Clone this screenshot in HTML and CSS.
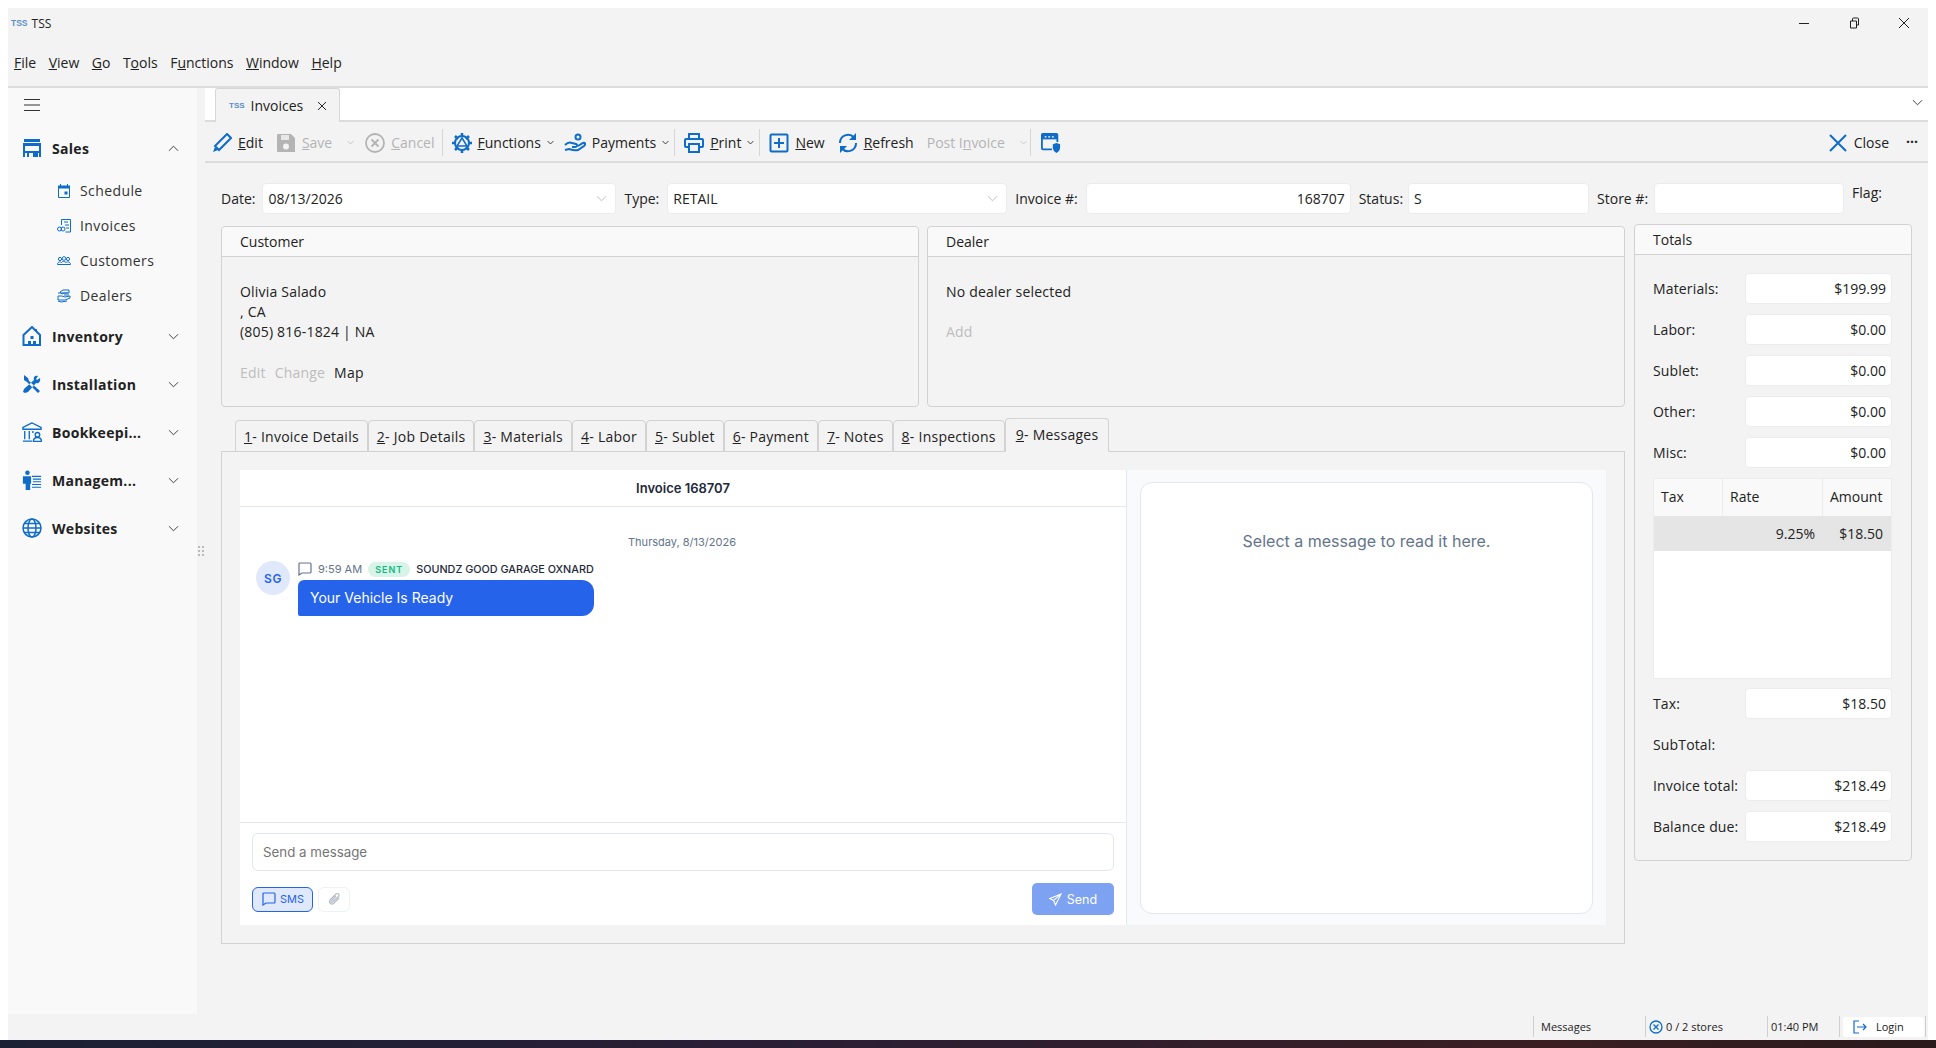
FILE: index.html
```html
<!DOCTYPE html>
<html lang="en">
<head>
    <meta charset="UTF-8">
    <title>TSS</title>
    <link rel="stylesheet" href="styles.css">
</head>
<body>
<div class="window">

    <div class="titlebar">
        <span class="logo">TSS</span>
        <span class="app-name">TSS</span>
        <div class="win-buttons">
            <svg width="12" height="12" viewBox="0 0 12 12"><path d="M1 6.5h10" stroke="#222" fill="none"/></svg>
            <svg width="12" height="12" viewBox="0 0 12 12"><path d="M2.5 4h6v7h-6zM4.5 4V2a1 1 0 0 1 1-1h4a1 1 0 0 1 1 1v6h-2" stroke="#222" fill="none"/></svg>
            <svg width="12" height="12" viewBox="0 0 12 12"><path d="M1 1l10 10M11 1L1 11" stroke="#222" fill="none"/></svg>
        </div>
    </div>

    <div class="menubar">
        <span><u>F</u>ile</span>
        <span><u>V</u>iew</span>
        <span><u>G</u>o</span>
        <span>T<u>o</u>ols</span>
        <span>F<u>u</u>nctions</span>
        <span><u>W</u>indow</span>
        <span><u>H</u>elp</span>
    </div>

    <div class="main">
        <aside class="sidebar">
            <svg class="burger" width="16" height="12" viewBox="0 0 16 12"><path d="M0 .5h16M0 6h16M0 11.5h16" stroke="#333" fill="none"/></svg>

            <div class="nav-group">
                <svg class="nav-icon" viewBox="0 0 20 18"><path d="M2 0h16v3H2zM1 4h18v3H1zM1 7h2v11H1zM17 7h2v11h-2zM3 12h14v2H3zM5 14h2v4H5zM11 14h5v4h-5z" fill="#0f6cc9"/></svg>
                <span>Sales</span>
                <svg class="chev" viewBox="0 0 12 7"><path d="M1 6l5-5 5 5" /></svg>
            </div>
            <div class="nav-item">
                <svg class="sub-icon" viewBox="0 0 14 14"><path d="M1.5 2.5h11v11h-11z" fill="none" stroke="#0f6cc9"/><path d="M1 1.5h12v3H1zM3 0h1v2H3zM10 0h1v2h-1zM7.5 7.5h3v3h-3z" fill="#0f6cc9"/></svg>
                Schedule
            </div>
            <div class="nav-item">
                <svg class="sub-icon" viewBox="0 0 14 14"><path d="M4.5 6V.5h9V13h-5M7 3h4M8 6h4M9 9h3" fill="none" stroke="#0f6cc9"/><circle cx="2.5" cy="10" r="2" fill="none" stroke="#0f6cc9"/><circle cx="6" cy="10" r="2" fill="none" stroke="#0f6cc9"/></svg>
                Invoices
            </div>
            <div class="nav-item">
                <svg class="sub-icon" viewBox="0 0 14 10"><circle cx="3" cy="3" r="1.6" fill="none" stroke="#0f6cc9"/><circle cx="7" cy="2.5" r="1.8" fill="none" stroke="#0f6cc9"/><circle cx="11" cy="3" r="1.6" fill="none" stroke="#0f6cc9"/><path d="M.5 8.5c0-3 3-3 4-2 1-1.500 3-1.500 4.500 0 1-1 4.500-1 4.500 2z" fill="none" stroke="#0f6cc9"/></svg>
                Customers
            </div>
            <div class="nav-item">
                <svg class="sub-icon" viewBox="0 0 14 14"><path d="M3 3l3-2h6v3H7L5 5zM1 4h10M12 6H7M1 7h4l3 1 5-1v2l-5 2H1zM1 12l3 1 6-1" fill="none" stroke="#0f6cc9"/></svg>
                Dealers
            </div>

            <div class="nav-group">
                <svg class="nav-icon" viewBox="0 0 20 20"><path d="M10 1L1.5 9v10H18V9zM14 3v2" fill="none" stroke="#0f6cc9" stroke-width="2"/><path d="M8.5 10h3v3h-3zM6 15h3v4H6zM11 15h3v4h-3z" fill="#0f6cc9"/></svg>
                <span>Inventory</span>
                <svg class="chev" viewBox="0 0 12 7"><path d="M1 1l5 5 5-5" /></svg>
            </div>
            <div class="nav-group">
                <svg class="nav-icon" viewBox="0 0 20 20"><path d="M2 1l4 3 1 3 11 10-2 2L5 8 2 6zM18 4l-3 2-1-1 2-3c-3-1-5 1-4 4L2 15l-1 3 2 1 3-1 8-9c2 1 5-1 4-5z" fill="#0f6cc9"/></svg>
                <span>Installation</span>
                <svg class="chev" viewBox="0 0 12 7"><path d="M1 1l5 5 5-5" /></svg>
            </div>
            <div class="nav-group">
                <svg class="nav-icon" viewBox="0 0 22 22"><path d="M11 1L1 6v2h20V6zM3 10v9M8 10v9M1 21h10M12 10v2" fill="none" stroke="#0f6cc9" stroke-width="1.5"/><circle cx="17" cy="14" r="2.500" fill="none" stroke="#0f6cc9" stroke-width="1.5"/><path d="M12.5 21.5c0-6 9-6 9 0z" fill="none" stroke="#0f6cc9" stroke-width="1.5"/></svg>
                <span>Bookkeepi...</span>
                <svg class="chev" viewBox="0 0 12 7"><path d="M1 1l5 5 5-5" /></svg>
            </div>
            <div class="nav-group">
                <svg class="nav-icon" viewBox="0 0 22 22"><circle cx="6" cy="3" r="2.500" fill="#0f6cc9"/><path d="M1 7h9v8H9v7H4v-7H1z" fill="#0f6cc9"/><path d="M11 7h10M12 10h9M12 13h9M11 16h10M11 19h10" stroke="#0f6cc9" stroke-width="1.2"/></svg>
                <span>Managem...</span>
                <svg class="chev" viewBox="0 0 12 7"><path d="M1 1l5 5 5-5" /></svg>
            </div>
            <div class="nav-group">
                <svg class="nav-icon" viewBox="0 0 20 20"><g fill="none" stroke="#0f6cc9" stroke-width="1.5"><circle cx="10" cy="10" r="9"/><ellipse cx="10" cy="10" rx="4" ry="9"/><path d="M1 10h18M2 5.5h16M2 14.5h16"/></g></svg>
                <span>Websites</span>
                <svg class="chev" viewBox="0 0 12 7"><path d="M1 1l5 5 5-5" /></svg>
            </div>
            <div class="grip">
                <i></i><i></i><i></i><i></i><i></i><i></i>
            </div>
        </aside>

        <section class="content">
            <div class="tabstrip">
                <div class="doc-tab">
                    <span class="logo small">TSS</span>
                    Invoices
                    <svg width="10" height="10" viewBox="0 0 10 10"><path d="M1 1l8 8M9 1L1 9" stroke="#222" fill="none"/></svg>
                </div>
                <svg class="strip-chev" width="11" height="7" viewBox="0 0 12 7"><path d="M1 1l5 5 5-5" stroke="#333" fill="none"/></svg>
            </div>

            <div class="toolbar">
                <div class="tool">
                    <svg class="t-icon" viewBox="0 0 20 20"><path d="M15 1l4 4L7 17l-4-4z" fill="none" stroke="#0f6cc9" stroke-width="2"/><path d="M1 19l2-5 3 3z" fill="#0f6cc9"/></svg>
                    <span><u>E</u>dit</span>
                </div>
                <div class="tool off">
                    <svg class="t-icon" viewBox="0 0 20 20"><path d="M2 1h13l4 4v14H2a1 1 0 0 1-1-1V2a1 1 0 0 1 1-1z" fill="#b4b4b4"/><path d="M5 2h8v5H5z" fill="#e8e8e8"/><circle cx="10" cy="13.5" r="3" fill="#f3f3f3"/></svg>
                    <span><u>S</u>ave</span>
                </div>
                <svg class="drop off-chev" viewBox="0 0 12 7"><path d="M1 1l5 5 5-5"/></svg>
                <div class="tool off">
                    <svg class="t-icon" viewBox="0 0 20 20"><circle cx="10" cy="10" r="9" fill="none" stroke="#b4b4b4" stroke-width="1.8"/><path d="M6.5 6.5l7 7M13.5 6.5l-7 7" stroke="#b4b4b4" stroke-width="1.8"/></svg>
                    <span><u>C</u>ancel</span>
                </div>
                <div class="sep"></div>
                <div class="tool">
                    <svg class="t-icon" viewBox="0 0 20 20"><g fill="none" stroke="#0f6cc9"><circle cx="10" cy="10" r="7" stroke-width="2"/><path d="M10 0v4M10 16v4M0 10h4M16 10h4M3 3l3 3M14 14l3 3M17 3l-3 3M6 14l-3 3" stroke-width="2.5"/><path d="M10 5l5 8H5z" stroke-width="1.5"/></g></svg>
                    <span><u>F</u>unctions</span>
                </div>
                <svg class="drop" viewBox="0 0 12 7"><path d="M1 1l5 5 5-5"/></svg>
                <div class="tool">
                    <svg class="t-icon wide" viewBox="0 0 22 20"><g fill="none" stroke="#0f6cc9" stroke-width="2"><circle cx="14" cy="4" r="2.500"/><path d="M1 12c3-3 5-3 7-2l4 1c2 1 1 3-1 3H8M14 13l5-3c2-1 3 1 1 3l-6 4c-3 1-6 0-9-1l-4 1"/></g></svg>
                    <span>Payments</span>
                </div>
                <svg class="drop" viewBox="0 0 12 7"><path d="M1 1l5 5 5-5"/></svg>
                <div class="sep"></div>
                <div class="tool">
                    <svg class="t-icon" viewBox="0 0 20 20"><g fill="none" stroke="#0f6cc9" stroke-width="2"><path d="M5 6V1h10v5M5 14H2a1 1 0 0 1-1-1V7a1 1 0 0 1 1-1h16a1 1 0 0 1 1 1v6a1 1 0 0 1-1 1h-3M5 11h10v8H5z"/></g></svg>
                    <span><u>P</u>rint</span>
                </div>
                <svg class="drop" viewBox="0 0 12 7"><path d="M1 1l5 5 5-5"/></svg>
                <div class="sep"></div>
                <div class="tool">
                    <svg class="t-icon" viewBox="0 0 20 20"><g fill="none" stroke="#0f6cc9" stroke-width="2"><rect x="1.5" y="1.5" width="17" height="17" rx="1"/><path d="M10 5v10M5 10h10"/></g></svg>
                    <span><u>N</u>ew</span>
                </div>
                <div class="tool">
                    <svg class="t-icon" viewBox="0 0 20 20"><g fill="none" stroke="#0f6cc9" stroke-width="2"><path d="M2 10a8 8 0 0 1 14-5.500M18 10a8 8 0 0 1-14 5.500"/></g><path d="M18 0v7h-7zM2 20v-7h7z" fill="#0f6cc9"/></svg>
                    <span><u>R</u>efresh</span>
                </div>
                <div class="tool off">
                    <span>Post I<u>n</u>voice</span>
                </div>
                <svg class="drop off-chev" viewBox="0 0 12 7"><path d="M1 1l5 5 5-5"/></svg>
                <div class="sep"></div>
                <div class="tool">
                    <svg class="t-icon wide" viewBox="0 0 22 22"><g fill="none" stroke="#0f6cc9" stroke-width="2"><path d="M12 18H2a1 1 0 0 1-1-1V2a1 1 0 0 1 1-1h15a1 1 0 0 1 1 1v8"/></g><path d="M1 1h17v6H1z" fill="#0f6cc9"/><path d="M4 3.500h2V5H4zM8 3.500h2V5H8zM12 3.500h2V5h-2z" fill="#fff"/><path d="M17 11l4 1.500V16c0 3-2 5-4 6-2-1-4-3-4-6v-3.500z" fill="#0f6cc9"/></svg>
                </div>
                <div class="tool right">
                    <svg class="t-icon" viewBox="0 0 20 20"><path d="M2 2l16 16M18 2L2 18" stroke="#0f6cc9" stroke-width="2" fill="none"/></svg>
                    <span>Close</span>
                </div>
                <span class="more">···</span>
            </div>

            <div class="form-row">
                <label>Date:</label>
                <div class="input w-date">08/13/2026<svg class="in-chev" viewBox="0 0 12 7"><path d="M1 1l5 5 5-5"/></svg></div>
                <label>Type:</label>
                <div class="input w-type">RETAIL<svg class="in-chev" viewBox="0 0 12 7"><path d="M1 1l5 5 5-5"/></svg></div>
                <label>Invoice #:</label>
                <div class="input w-inv num">168707</div>
                <label>Status:</label>
                <div class="input w-status">S</div>
                <label>Store #:</label>
                <div class="input w-store"></div>
                <label class="flag">Flag:</label>
            </div>

            <div class="body-grid">
                <div class="left-col">
                    <div class="panels">
                        <div class="panel">
                            <div class="panel-head">Customer</div>
                            <div class="panel-body">
                                <p>Olivia Salado</p>
                                <p>, CA</p>
                                <p>(805) 816-1824 | NA</p>
                                <p class="links"><span class="dim">Edit</span><span class="dim">Change</span><span>Map</span></p>
                            </div>
                        </div>
                        <div class="panel">
                            <div class="panel-head">Dealer</div>
                            <div class="panel-body">
                                <p>No dealer selected</p>
                                <p>&nbsp;</p>
                                <p class="dim">Add</p>
                            </div>
                        </div>
                    </div>

                    <div class="tabs">
                        <div class="tab"><u>1</u>- Invoice Details</div>
                        <div class="tab"><u>2</u>- Job Details</div>
                        <div class="tab"><u>3</u>- Materials</div>
                        <div class="tab"><u>4</u>- Labor</div>
                        <div class="tab"><u>5</u>- Sublet</div>
                        <div class="tab"><u>6</u>- Payment</div>
                        <div class="tab"><u>7</u>- Notes</div>
                        <div class="tab"><u>8</u>- Inspections</div>
                        <div class="tab active"><u>9</u>- Messages</div>
                    </div>

                    <div class="tab-page">
                        <div class="messenger">
                            <div class="thread">
                                <div class="thread-head">Invoice 168707</div>
                                <div class="thread-body">
                                    <div class="day">Thursday, 8/13/2026</div>
                                    <div class="msg">
                                        <div class="avatar">SG</div>
                                        <div>
                                            <div class="msg-meta">
                                                <svg width="14" height="14" viewBox="0 0 14 14"><path d="M2 1h10a1 1 0 0 1 1 1v8a1 1 0 0 1-1 1H4l-3 2V2a1 1 0 0 1 1-1z" fill="none" stroke="#64748b" stroke-width="1.2"/></svg>
                                                <span class="time">9:59 AM</span>
                                                <span class="sent">SENT</span>
                                                <span class="sender">SOUNDZ GOOD GARAGE OXNARD</span>
                                            </div>
                                            <div class="bubble">Your Vehicle Is Ready</div>
                                        </div>
                                    </div>
                                </div>
                                <div class="composer">
                                    <div class="msg-input">Send a message</div>
                                    <div class="composer-row">
                                        <div class="sms">
                                            <svg width="14" height="14" viewBox="0 0 14 14"><path d="M2 1h10a1 1 0 0 1 1 1v8a1 1 0 0 1-1 1H4l-3 2V2a1 1 0 0 1 1-1z" fill="none" stroke="#2563eb" stroke-width="1.2"/></svg>
                                            SMS
                                        </div>
                                        <div class="attach">
                                            <svg width="14" height="14" viewBox="0 0 14 14"><path d="M12 6l-5.500 5.500a2.500 2.500 0 0 1-3.500-3.500l6-6a1.700 1.700 0 0 1 2.500 2.500L5.500 10a.8.8 0 0 1-1.200-1.200L9 4" fill="none" stroke="#b6bcc8" stroke-width="1.2"/></svg>
                                        </div>
                                        <div class="send">
                                            <svg width="13" height="13" viewBox="0 0 14 14"><path d="M13 1L1 6l4 2 2 5zM5 8l8-7" fill="none" stroke="#fff" stroke-width="1.2"/></svg>
                                            Send
                                        </div>
                                    </div>
                                </div>
                            </div>
                            <div class="reader">
                                <div class="reader-card">Select a message to read it here.</div>
                            </div>
                        </div>
                    </div>
                </div>

                <div class="totals">
                    <div class="panel-head">Totals</div>
                    <div class="totals-body">
                        <div class="t-row"><span>Materials:</span><div class="input num">$199.99</div></div>
                        <div class="t-row"><span>Labor:</span><div class="input num">$0.00</div></div>
                        <div class="t-row"><span>Sublet:</span><div class="input num">$0.00</div></div>
                        <div class="t-row"><span>Other:</span><div class="input num">$0.00</div></div>
                        <div class="t-row"><span>Misc:</span><div class="input num">$0.00</div></div>
                        <div class="tax-table">
                            <div class="tax-head"><span>Tax</span><span>Rate</span><span>Amount</span></div>
                            <div class="tax-line"><span></span><span>9.25%</span><span>$18.50</span></div>
                        </div>
                        <div class="t-row"><span>Tax:</span><div class="input num">$18.50</div></div>
                        <div class="t-row"><span>SubTotal:</span></div>
                        <div class="t-row"><span>Invoice total:</span><div class="input num">$218.49</div></div>
                        <div class="t-row"><span>Balance due:</span><div class="input num">$218.49</div></div>
                    </div>
                </div>
            </div>
        </section>
    </div>

    <div class="statusbar">
        <div class="st-cell st-msg">Messages</div>
        <div class="st-cell st-stores">
            <svg width="14" height="14" viewBox="0 0 14 14"><circle cx="7" cy="7" r="6" fill="none" stroke="#0f6cc9" stroke-width="1.3"/><path d="M4.5 4.5l5 5M9.5 4.5l-5 5" stroke="#0f6cc9" stroke-width="1.3"/></svg>
            0 / 2 stores
        </div>
        <div class="st-cell st-time">01:40 PM</div>
        <div class="st-cell st-login">
            <div class="login">
                <svg width="14" height="14" viewBox="0 0 14 14"><path d="M6 1H1v12h5M4 7h9M10 4l3 3-3 3" fill="none" stroke="#0f6cc9" stroke-width="1.2"/></svg>
                Login
            </div>
        </div>
    </div>
</div>
<div class="taskbar"></div>
</body>
</html>
```

FILE: styles.css
```css
* {
    box-sizing: border-box;
}

html, body {
    margin: 0;
    height: 100%;
    overflow: hidden;
}

body {
    background: #fff;
    font-family: "Open Sans", "Noto Sans", sans-serif;
    font-size: 14px;
    color: #222;
    padding: 8px 8px 0;
    display: flex;
    flex-direction: column;
}

p {
    margin: 0;
}

.window {
    height: 1032px;
    background: #f3f3f3;
    display: flex;
    flex-direction: column;
}

.taskbar {
    height: 8px;
    margin: 0 -8px;
    background: linear-gradient(90deg, #1c2033, #2a1e35 40%, #3a1e22 80%, #2a1a1c);
}

.logo {
    font-family: "Liberation Sans", sans-serif;
    font-weight: 700;
    font-size: 8.5px;
    color: #5b8fc7;
}

.logo.small {
    font-size: 8px;
}

/* title + menu */
.titlebar {
    height: 30px;
    display: flex;
    align-items: center;
    padding: 0 18px 0 3px;
}

.app-name {
    font-size: 12px;
    margin-left: 4px;
}

.win-buttons {
    margin-left: auto;
    display: flex;
    gap: 38px;
}

.menubar {
    height: 50px;
    border-bottom: 2px solid #dcdcdc;
    display: flex;
    gap: 12.5px;
    padding: 15px 0 0 6px;
    font-size: 14px;
}

.main {
    flex: 1;
    display: flex;
    min-height: 0;
}

/* sidebar */
.sidebar {
    width: 189px;
    background: #f9f9f9;
    position: relative;
    padding-top: 11px;
}

.burger {
    display: block;
    margin: 0 0 0 16px;
}

.nav-group {
    display: flex;
    align-items: center;
    height: 48px;
    padding-left: 14px;
    font-weight: 700;
    font-size: 14px;
    letter-spacing: .3px;
}

.sidebar > .burger + .nav-group {
    margin: 14px 0 2px;
    height: 46px;
}

.nav-item + .nav-group {
    margin-top: -1px;
}

.nav-icon {
    width: 20px;
    height: 20px;
    margin-right: 10px;
    flex: none;
}

.chev {
    width: 11px;
    height: 7px;
    margin-left: auto;
    margin-right: 18px;
    fill: none;
    stroke: #333;
    stroke-width: 1;
}

.nav-item {
    display: flex;
    align-items: center;
    height: 35px;
    padding-left: 49px;
    font-size: 14px;
    letter-spacing: .4px;
    color: #333;
}

.sub-icon {
    width: 14px;
    height: 14px;
    margin-right: 9px;
}

.grip {
    position: absolute;
    right: -7px;
    top: 458px;
    display: grid;
    grid-template-columns: 2px 2px;
    gap: 2px;
}

.grip i {
    width: 2px;
    height: 2px;
    background: #bbb;
}

/* document tab strip */
.content {
    flex: 1;
    min-width: 0;
    display: flex;
    flex-direction: column;
}

.tabstrip {
    height: 34px;
    margin-left: 8px;
    background: #fff;
    border-bottom: 2px solid #dcdcdc;
    display: flex;
}

.doc-tab {
    height: 34px;
    width: 125px;
    margin-left: 10px;
    background: #f3f3f3;
    border: 1px solid #d6d6d6;
    border-bottom: none;
    border-radius: 3px 3px 0 0;
    display: flex;
    align-items: center;
    padding-left: 13px;
    gap: 6px;
}

.doc-tab svg {
    margin-left: 8px;
}

.strip-chev {
    margin: 11px 5px 0 auto;
}

/* toolbar */
.toolbar {
    height: 41px;
    margin-left: 8px;
    border-bottom: 2px solid #dcdcdc;
    display: flex;
    align-items: center;
    padding: 2px 10px 0 7px;
    font-size: 14px;
}

.tool {
    display: flex;
    align-items: center;
    gap: 6px;
    margin-right: 13px;
}

.tool.off {
    color: #b4b4b4;
}

.tool.right {
    margin-left: auto;
    margin-right: 17px;
}

.t-icon {
    width: 20px;
    height: 20px;
    flex: none;
}

.t-icon.wide {
    width: 22px;
}

.drop {
    width: 7px;
    height: 5px;
    fill: none;
    stroke: #333;
    stroke-width: 1.6;
    margin: 0 10px 0 -7px;
}

.drop.off-chev {
    stroke: #c4c4c4;
    margin: 0 11px 0 2px;
}

.sep {
    width: 1px;
    height: 27px;
    background: #d6d6d6;
    margin: 0 9px 0 0;
}

.tool + .sep {
    margin-left: -6px;
}

.drop + .sep {
    margin-left: -5px;
}

.off-chev + .sep {
    margin-left: -8px;
}

.more {
    font-weight: 700;
    margin-bottom: 2px;
}

/* header fields */
.form-row {
    display: flex;
    align-items: center;
    height: 31px;
    margin: 20px 0 0 8px;
    padding-left: 16px;
    gap: 8px;
}

.input {
    height: 31px;
    background: #fff;
    border: 1px solid #ececec;
    border-radius: 4px;
    display: flex;
    align-items: center;
    padding: 0 5px;
    font-size: 14px;
}

.input.num {
    justify-content: flex-end;
}

.w-date {
    width: 354px;
    margin-left: -1px;
}

.w-type {
    width: 340px;
}

.w-inv {
    width: 265px;
}

.w-status {
    width: 181px;
    margin-left: -3px;
}

.w-store {
    width: 190px;
    margin-left: -2px;
}

.flag {
    align-self: flex-start;
}

.in-chev {
    width: 11px;
    height: 7px;
    margin-left: auto;
    margin-right: 3px;
    fill: none;
    stroke: #bbb;
}

/* body */
.body-grid {
    display: flex;
    margin: 10px 0 0 24px;
    gap: 9px;
}

.left-col {
    width: 1404px;
}

.panels {
    display: flex;
    gap: 8px;
    margin-top: 2px;
}

.panel {
    flex: 1;
    height: 181px;
    border: 1px solid #d2d2d2;
    border-radius: 4px;
}

.panel-head {
    height: 30px;
    background: #f9f9f9;
    border-bottom: 1px solid #d2d2d2;
    border-radius: 4px 4px 0 0;
    padding: 5px 0 0 18px;
    font-size: 14px;
}

.panel-body {
    padding: 25px 18px 0;
    line-height: 20px;
    letter-spacing: .2px;
}

.links {
    margin-top: 21px;
    display: flex;
    gap: 9px;
}

.dim {
    color: #bdbdbd;
}

/* inner tabs */
.tabs {
    display: flex;
    padding-left: 14px;
    margin-top: 11px;
    align-items: flex-end;
    height: 34px;
    position: relative;
    z-index: 1;
}

.tab {
    height: 32px;
    background: #f3f3f3;
    border: 1px solid #d2d2d2;
    border-radius: 4px 4px 0 0;
    padding: 6px 8px 0;
    white-space: nowrap;
    font-size: 14px;
    letter-spacing: .25px;
}

.tab.active {
    height: 34px;
    border-bottom: 1px solid #f3f3f3;
    padding: 6px 10px 0;
}

.tab-page {
    margin-top: -1px;
    height: 493px;
    border: 1px solid #d2d2d2;
    padding: 18px;
}

.messenger {
    display: flex;
    height: 455px;
    font-family: Inter, "Liberation Sans", sans-serif;
    background: #fff;
}

.thread {
    width: 887px;
    display: flex;
    flex-direction: column;
    border-right: 1px solid #e2e8f0;
}

.thread-head {
    height: 37px;
    border-bottom: 1px solid #e2e8f0;
    text-align: center;
    line-height: 36px;
    font-size: 13px;
    font-weight: 600;
    color: #1e293b;
}

.thread-body {
    flex: 1;
    padding: 28px 18px 0 16px;
}

.day {
    text-align: center;
    font-size: 11px;
    color: #64748b;
    line-height: 14px;
}

.msg {
    display: flex;
    gap: 8px;
    margin-top: 12px;
}

.avatar {
    width: 34px;
    height: 34px;
    border-radius: 50%;
    background: #e0e8fb;
    color: #2563eb;
    font-size: 12px;
    font-weight: 600;
    letter-spacing: .5px;
    display: flex;
    align-items: center;
    justify-content: center;
}

.msg-meta {
    display: flex;
    align-items: center;
    height: 16px;
    gap: 6px;
    font-size: 11px;
}

.time {
    color: #64748b;
}

.sent {
    background: #d8f3e8;
    color: #10b981;
    font-size: 9px;
    font-weight: 600;
    letter-spacing: 1px;
    border-radius: 8px;
    padding: 2px 7px;
}

.sender {
    color: #1e293b;
    font-weight: 500;
    font-size: 10.8px;
    white-space: nowrap;
}

.bubble {
    width: 296px;
    height: 36px;
    margin-top: 3px;
    background: #2563eb;
    color: #fff;
    border-radius: 6px 12px 12px 2px;
    padding: 0 12px;
    line-height: 35px;
    font-size: 14px;
}

.composer {
    height: 103px;
    border-top: 1px solid #e2e8f0;
    padding: 10px 12px;
}

.msg-input {
    height: 38px;
    border: 1px solid #e2e8f0;
    border-radius: 6px;
    padding: 0 10px;
    line-height: 36px;
    font-size: 13.3px;
    color: #757575;
}

.composer-row {
    display: flex;
    align-items: center;
    gap: 5px;
    margin-top: 12px;
}

.sms {
    height: 25px;
    width: 61px;
    border: 1px solid #2563eb;
    border-radius: 6px;
    background: #e0e8fb;
    color: #2563eb;
    font-size: 11px;
    display: flex;
    align-items: center;
    gap: 4px;
    padding-left: 9px;
}

.attach {
    width: 32px;
    height: 25px;
    border: 1px solid #eef1f6;
    border-radius: 6px;
    display: flex;
    align-items: center;
    justify-content: center;
}

.send {
    margin-left: auto;
    width: 82px;
    height: 32px;
    background: #7ea2f2;
    color: #fff;
    border-radius: 5px;
    font-size: 12.5px;
    display: flex;
    align-items: center;
    justify-content: center;
    gap: 5px;
}

.reader {
    flex: 1;
    background: #f8fafc;
    padding: 12px 13px 11px;
}

.reader-card {
    height: 100%;
    background: #fff;
    border: 1px solid #e2e8f0;
    border-radius: 12px;
    text-align: center;
    padding-top: 48px;
    font-size: 16px;
    color: #64748b;
}

/* totals */
.totals {
    width: 278px;
    height: 637px;
    border: 1px solid #d2d2d2;
    border-radius: 4px;
}

.totals-body {
    padding: 18px 19px 18px 18px;
}

.t-row {
    display: flex;
    align-items: center;
    justify-content: space-between;
    height: 31px;
    margin-bottom: 10px;
    letter-spacing: .15px;
}

.t-row .input {
    width: 147px;
    letter-spacing: 0;
}

.tax-table {
    height: 201px;
    background: #fff;
    border: 1px solid #ececec;
    margin-bottom: 9px;
}

.tax-head,
.tax-line {
    display: grid;
    grid-template-columns: 69px 100px 1fr;
}

.tax-head {
    height: 37px;
    background: #f9f9f9;
    line-height: 36px;
}

.tax-head span {
    padding-left: 7px;
    border-right: 1px solid #ececec;
}

.tax-head span:last-child {
    border-right: none;
}

.tax-line {
    height: 35px;
    background: #e5e5e5;
    line-height: 35px;
    text-align: right;
}

.tax-line span {
    padding-right: 8px;
}

/* status bar */
.statusbar {
    height: 26px;
    flex: none;
    display: flex;
    justify-content: flex-end;
    font-size: 11px;
    padding: 2px 0 3px;
}

.st-cell {
    border-left: 1px solid #cfcfcf;
    display: flex;
    align-items: center;
}

.st-msg {
    width: 112px;
    padding-left: 7px;
}

.st-stores {
    width: 122px;
    padding-left: 3px;
    gap: 3px;
}

.st-time {
    width: 72px;
    padding-left: 3px;
}

.st-login {
    width: 87px;
    margin-right: 2px;
    padding-left: 3px;
    border-right: 1px solid #cfcfcf;
}

.login {
    width: 81px;
    height: 20px;
    background: #fff;
    border-radius: 3px;
    display: flex;
    align-items: center;
    gap: 9px;
    padding-left: 10px;
}
```
